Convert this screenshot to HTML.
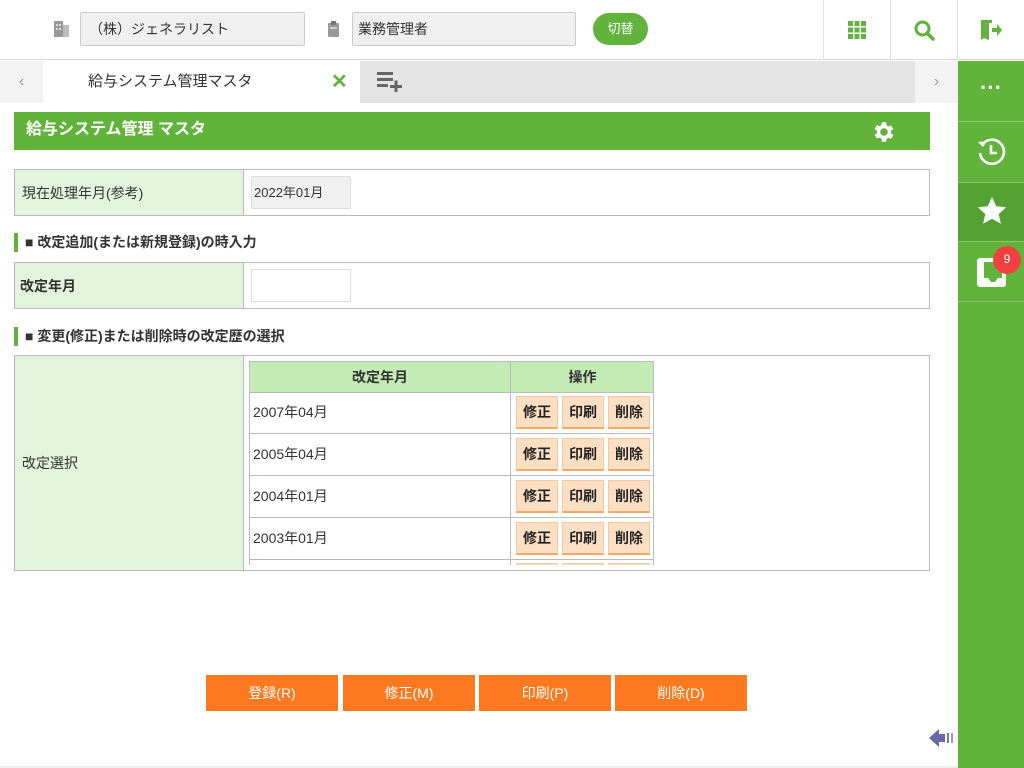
<!DOCTYPE html>
<html><head><meta charset="utf-8"><style>
*{box-sizing:border-box;margin:0;padding:0}
body{width:1024px;height:768px;overflow:hidden;position:relative;background:#fff;font-family:"Liberation Sans","Noto Sans CJK JP",sans-serif;color:#333;font-size:14px}
.abs{position:absolute}
.inp{position:absolute;background:#f0f0f0;border:1px solid #ccc;border-radius:2px;font-size:14px;padding-left:8px;line-height:32px}
.vd{position:absolute;top:0;width:1px;height:60px;background:#e3e3e3}
.side{position:absolute;left:958px;width:66px;background:#62b33c;border-bottom:1px solid #8cc971}
.tbl{position:absolute;left:14px;width:916px;border:1px solid #bbb}
.lab{position:absolute;left:0;top:0;bottom:0;width:229px;background:#e2f5dc;border-right:1px solid #bbb;padding-left:7px;display:flex;align-items:center;font-size:14px}
.h2{position:absolute;left:14px;border-left:4px solid #62b33c;padding-left:7px;font-weight:bold;font-size:14px;height:19px;line-height:19px}
.row{position:absolute;left:249px;width:405px;height:42px;border-bottom:1px solid #bbb;border-left:1px solid #bbb;border-right:1px solid #bbb}
.row .d{position:absolute;left:3px;top:0;line-height:40px;font-size:14px}
.row .c{position:absolute;left:260px;top:0;bottom:0;border-left:1px solid #bbb}
.sb{position:absolute;top:4px;width:42px;height:33px;background:#fddfc4;border:1px solid #f5c9a0;border-bottom:2px solid #f5a766;font-weight:bold;font-size:14px;text-align:center;line-height:30px;color:#222}
.ob{position:absolute;top:675px;height:36px;background:#fc791f;color:#fff;text-align:center;line-height:36px;font-size:14px;width:132px}
</style></head><body>
<!-- top bar -->
<div class="abs" style="left:0;top:0;width:1024px;height:60px;border-bottom:1px solid #d8d8d8"></div>
<svg class="abs" style="left:54px;top:21px" width="16" height="17"><rect x="0" y="0" width="9" height="16" fill="#999"/><rect x="9" y="4" width="6" height="12" fill="#bbb"/><rect x="2" y="3" width="2" height="2" fill="#ddd"/><rect x="5" y="3" width="2" height="2" fill="#ddd"/><rect x="2" y="7" width="2" height="2" fill="#ddd"/><rect x="5" y="7" width="2" height="2" fill="#ddd"/></svg>
<div class="inp" style="left:80px;top:12px;width:225px;height:34px;">（株）ジェネラリスト</div>
<svg class="abs" style="left:328px;top:21px" width="12" height="16"><rect x="0" y="2" width="11" height="14" rx="1" fill="#999"/><rect x="3" y="0" width="5" height="4" fill="#777"/><rect x="2" y="6" width="7" height="2" fill="#ccc"/></svg>
<div class="inp" style="left:352px;top:12px;width:224px;height:34px;padding-left:5px">業務管理者</div>
<div class="abs" style="left:593px;top:13px;width:55px;height:32px;border-radius:16px;background:#62b33c;color:#fff;text-align:center;line-height:32px;font-size:13px">切替</div>
<div class="vd" style="left:823px"></div><div class="vd" style="left:890px"></div><div class="vd" style="left:957px"></div>
<svg class="abs" style="left:848px;top:21px" width="18" height="18" fill="#62b33c"><rect x="0" y="0" width="5" height="5"/><rect x="6.5" y="0" width="5" height="5"/><rect x="13" y="0" width="5" height="5"/><rect x="0" y="6.5" width="5" height="5"/><rect x="6.5" y="6.5" width="5" height="5"/><rect x="13" y="6.5" width="5" height="5"/><rect x="0" y="13" width="5" height="5"/><rect x="6.5" y="13" width="5" height="5"/><rect x="13" y="13" width="5" height="5"/></svg>
<svg class="abs" style="left:914px;top:20px" width="21" height="21"><circle cx="8.5" cy="8.5" r="6.5" fill="none" stroke="#62b33c" stroke-width="3"/><line x1="13" y1="13" x2="19" y2="19" stroke="#62b33c" stroke-width="3.5" stroke-linecap="round"/></svg>
<svg class="abs" style="left:980px;top:19px" width="22" height="22" fill="#62b33c"><path d="M1 1h11v3H5v14l-4 3z"/><path d="M1 1l8 3v17l-8-3z"/><path d="M12 9h5V5l5 6-5 6v-4h-5z"/></svg>
<!-- tabs -->
<div class="abs" style="left:0;top:61px;width:43px;height:42px;background:#f3f3f3;color:#999;text-align:center;line-height:42px;font-size:16px">‹</div>
<div class="abs" style="left:43px;top:61px;width:317px;height:42px;background:#fff"></div>
<div class="abs" style="left:88px;top:61px;line-height:42px;font-size:15px;color:#333">給与システム管理マスタ</div>
<div class="abs" style="left:331px;top:61px;line-height:42px;font-size:20px;font-weight:bold;color:#62b33c">✕</div>
<div class="abs" style="left:360px;top:61px;width:555px;height:42px;background:#e4e4e4"></div>
<svg class="abs" style="left:377px;top:72px" width="26" height="20" fill="#666"><rect x="0" y="0" width="16" height="3"/><rect x="0" y="6" width="16" height="3"/><rect x="0" y="12" width="11" height="3"/><rect x="13" y="13" width="12" height="3"/><rect x="17.5" y="8.5" width="3" height="12"/></svg>
<div class="abs" style="left:915px;top:61px;width:43px;height:42px;background:#f3f3f3;color:#999;text-align:center;line-height:42px;font-size:16px">›</div>
<!-- sidebar -->
<div class="side" style="top:61px;height:707px;border:none"></div>
<div class="side" style="top:61px;height:61px"></div>
<div class="abs" style="left:958px;top:61px;width:66px;height:60px;color:#fff;text-align:center;line-height:54px;font-size:22px;font-weight:bold">···</div>
<div class="side" style="top:122px;height:61px"></div>
<svg class="abs" style="left:976px;top:136px" width="32" height="32" fill="none" stroke="#fff" stroke-width="2.6"><path d="M6 9A12 12 0 1 1 4 17"/><path d="M2 6l5 5 4-6z" fill="#fff" stroke="none"/><path d="M15 9v8h6"/></svg>
<div class="side" style="top:183px;height:59px;background:#54a232"></div>
<svg class="abs" style="left:977px;top:196px" width="30" height="30"><path d="M15 1l4.2 9.2 10 1-7.5 6.8 2.2 9.8L15 22.8 6.1 27.8l2.2-9.8L.8 11.2l10-1z" fill="#fff"/></svg>
<div class="side" style="top:242px;height:60px"></div>
<svg class="abs" style="left:977px;top:255px" width="30" height="32"><path d="M3 3h20v4H7v16h4l3 4h4l3-4h4v-10h4v16a3 3 0 0 1-3 3H3a3 3 0 0 1-3-3V6a3 3 0 0 1 3-3z" fill="#fff"/></svg>
<div class="abs" style="left:993px;top:246px;width:28px;height:28px;border-radius:50%;background:#f04040;color:#fff;text-align:center;line-height:26px;font-size:12px">9</div>
<!-- header -->
<div class="abs" style="left:14px;top:112px;width:916px;height:38px;background:#62b33c"></div>
<div class="abs" style="left:26px;top:112px;line-height:36px;color:#fff;font-weight:bold;font-size:16px">給与システム管理 マスタ</div>
<svg class="abs" style="left:871px;top:119px" width="26" height="26" viewBox="0 0 24 24"><path fill="#fff" d="M19.4 13a7.5 7.5 0 0 0 0-2l2.1-1.6-2-3.5-2.5 1a7 7 0 0 0-1.7-1L15 3h-4l-.4 2.7a7 7 0 0 0-1.7 1l-2.5-1-2 3.5L6.6 11a7.5 7.5 0 0 0 0 2l-2.1 1.6 2 3.5 2.5-1a7 7 0 0 0 1.7 1L11 21h4l.4-2.7a7 7 0 0 0 1.7-1l2.5 1 2-3.5zM13 15.5a3.5 3.5 0 1 1 0-7 3.5 3.5 0 0 1 0 7z" transform="translate(-1 0)"/></svg>
<!-- table1 -->
<div class="tbl" style="top:169px;height:47px"><div class="lab">現在処理年月(参考)</div></div>
<div class="inp" style="left:251px;top:176px;width:100px;height:33px;padding-left:2px;font-size:13px;border-color:#ddd">2022年01月</div>
<div class="h2" style="top:233px">■ 改定追加(または新規登録)の時入力</div>
<div class="tbl" style="top:262px;height:47px"><div class="lab" style="font-weight:bold;padding-left:5px">改定年月</div></div>
<div class="abs" style="left:251px;top:269px;width:100px;height:33px;border:1px solid #ddd;background:#fff"></div>
<div class="h2" style="top:327px">■ 変更(修正)または削除時の改定歴の選択</div>
<div class="tbl" style="top:355px;height:216px;overflow:hidden"><div class="lab">改定選択</div></div>
<div class="abs" style="left:249px;top:361px;width:405px;height:204px;overflow:hidden">
 <div class="abs" style="left:0;top:0;width:405px;height:32px;background:#c4ebb5;border:1px solid #bbb;font-weight:bold;font-size:14px">
  <div class="abs" style="left:0;width:260px;text-align:center;line-height:30px">改定年月</div>
  <div class="abs" style="left:260px;width:144px;height:30px;border-left:1px solid #bbb;text-align:center;line-height:30px">操作</div>
 </div>
</div>
<div class="abs" style="left:249px;top:361px;width:406px;height:204px;overflow:hidden">
 <div class="row" style="left:0;top:31px"><div class="d">2007年04月</div><div class="c"><div class="sb" style="left:5px">修正</div><div class="sb" style="left:51px">印刷</div><div class="sb" style="left:97px">削除</div></div></div>
 <div class="row" style="left:0;top:73px"><div class="d">2005年04月</div><div class="c"><div class="sb" style="left:5px">修正</div><div class="sb" style="left:51px">印刷</div><div class="sb" style="left:97px">削除</div></div></div>
 <div class="row" style="left:0;top:115px"><div class="d">2004年01月</div><div class="c"><div class="sb" style="left:5px">修正</div><div class="sb" style="left:51px">印刷</div><div class="sb" style="left:97px">削除</div></div></div>
 <div class="row" style="left:0;top:157px"><div class="d">2003年01月</div><div class="c"><div class="sb" style="left:5px">修正</div><div class="sb" style="left:51px">印刷</div><div class="sb" style="left:97px">削除</div></div></div>
 <div class="row" style="left:0;top:198px"><div class="c"><div class="sb" style="left:5px"></div><div class="sb" style="left:51px"></div><div class="sb" style="left:97px"></div></div></div>
</div>
<!-- bottom buttons -->
<div class="ob" style="left:206px">登録(R)</div>
<div class="ob" style="left:343px">修正(M)</div>
<div class="ob" style="left:479px">印刷(P)</div>
<div class="ob" style="left:615px">削除(D)</div>
<svg class="abs" style="left:929px;top:727px" width="28" height="22"><path d="M0 11L10 2v5h6v8h-6v5z" fill="#6a6aa8"/><rect x="18" y="6" width="2" height="10" fill="#7a7ab0"/><rect x="22" y="6" width="2" height="10" fill="#9a9ac0"/></svg>
<div class="abs" style="left:0;top:766px;width:958px;height:2px;background:#eee"></div>
</body></html>
